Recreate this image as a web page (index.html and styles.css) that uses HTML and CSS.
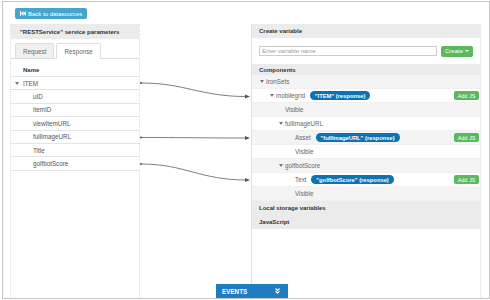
FILE: index.html
```html
<!DOCTYPE html>
<html lang="en">

<head>
    <meta charset="UTF-8">
    <title>REST datasource mapping</title>
    <link rel="stylesheet" href="styles.css">
</head>

<body>
    <div class="frame">
        <div class="topbar">
            <button class="back-btn">
                <svg width="6" height="5" viewBox="0 0 6 5"><rect x="0" y="0" width="1" height="5" fill="#fff"/><polygon points="1,2.5 3.5,0 3.5,5" fill="#fff"/><polygon points="3.5,2.5 6,0 6,5" fill="#fff"/></svg>
                Back to datasources
            </button>
        </div>

        <div class="columns">
            <section class="params">
                <div class="panel-title">"RESTService" service parameters</div>
                <div class="tabs">
                    <span class="tab">Request</span>
                    <span class="tab active">Response</span>
                </div>
                <div class="name-head">Name</div>
                <div class="param-list">
                    <div class="param-row"><span class="caret"></span>ITEM</div>
                    <div class="param-row child">uID</div>
                    <div class="param-row child">itemID</div>
                    <div class="param-row child">viewItemURL</div>
                    <div class="param-row child">fullImageURL</div>
                    <div class="param-row child">Title</div>
                    <div class="param-row child">golfbotScore</div>
                </div>
            </section>

            <div class="links">
                <svg width="111" height="170" viewBox="0 0 111 170">
                    <g fill="none" stroke="#6f6f6f" stroke-width="0.9">
                        <path d="M1,59 C45,59 60,72.5 106,72.5"/>
                        <path d="M1,113.5 C45,113.5 60,114 106,114"/>
                        <path d="M1,140 C45,140 60,156 106,156"/>
                    </g>
                    <g fill="#555">
                        <circle cx="1" cy="59" r="1"/>
                        <circle cx="1" cy="113.5" r="1"/>
                        <circle cx="1" cy="140" r="1"/>
                        <polygon points="105,70.5 110,72.5 105,74.5"/>
                        <polygon points="105,112 110,114 105,116"/>
                        <polygon points="105,154 110,156 105,158"/>
                    </g>
                </svg>
            </div>

            <section class="builder">
                <div class="panel-title">Create variable</div>
                <div class="create-row">
                    <input type="text" placeholder="Enter variable name">
                    <button class="create-btn">Create <span class="down"></span></button>
                </div>
                <div class="panel-title small">Components</div>
                <div class="comp-row alt lvl0"><span class="caret"></span>IronSets</div>
                <div class="comp-row lvl1"><span class="caret"></span>mobilegrid <span class="pill">"ITEM" (response)</span><button class="add-js">Add JS</button></div>
                <div class="comp-row alt lvl2 leaf">Visible</div>
                <div class="comp-row lvl2"><span class="caret"></span>fullImageURL</div>
                <div class="comp-row alt lvl3 leaf">Asset <span class="pill">"fullImageURL" (response)</span><button class="add-js">Add JS</button></div>
                <div class="comp-row lvl3 leaf">Visible</div>
                <div class="comp-row alt lvl2"><span class="caret"></span>golfbotScore</div>
                <div class="comp-row lvl3 leaf">Text <span class="pill">"golfbotScore" (response)</span><button class="add-js">Add JS</button></div>
                <div class="comp-row alt lvl3 leaf">Visible</div>
                <div class="panel-title">Local storage variables</div>
                <div class="panel-title">JavaScript</div>
            </section>
        </div>

        <div class="events-tab">
            <span>EVENTS</span>
            <svg width="5" height="6" viewBox="0 0 5 6"><path d="M0.5,0.5 L2.5,2.5 L4.5,0.5 M0.5,3.2 L2.5,5.2 L4.5,3.2" fill="none" stroke="#fff" stroke-width="1.1"/></svg>
        </div>
    </div>
</body>

</html>
```

FILE: styles.css
```css
* {
    margin: 0;
    padding: 0;
    box-sizing: border-box;
    font-family: "Liberation Sans", Arial, sans-serif;
}

body {
    background-color: #fff;
}

.frame {
    position: relative;
    width: 488px;
    height: 298px;
    margin: 1px 0 0 2px;
    border: 1px solid #c6c6c6;
    padding: 6px 7px 0 7px;
    display: flex;
    flex-direction: column;
}

.topbar {
    height: 11px;
    margin-bottom: 5px;
    padding-left: 5px;
    display: flex;
}

.back-btn {
    width: 72px;
    height: 11px;
    display: flex;
    align-items: center;
    gap: 2px;
    padding: 0 3px 0 5px;
    border: none;
    border-radius: 2px;
    background-color: #45a5cf;
    color: #fff;
    font-size: 6px;
    white-space: nowrap;
}

.columns {
    flex: 1;
    display: flex;
}

.params {
    width: 130px;
    border-left: 1px dotted #dcdcdc;
    border-right: 1px dotted #dcdcdc;
}

.links {
    width: 111px;
}

.links svg {
    display: block;
}

.builder {
    width: 230px;
    border-left: 1px solid #e0e0e0;
    border-right: 1px solid #eee;
}

.panel-title {
    height: 14px;
    display: flex;
    align-items: center;
    padding-left: 7px;
    background-color: #ebebeb;
    color: #333;
    font-size: 6px;
    font-weight: bold;
}

.panel-title.small {
    height: 11px;
}

.params .panel-title {
    height: 15px;
    padding-left: 9px;
}

.tabs {
    display: flex;
    gap: 2px;
    padding: 4px 0 0 4px;
    border-bottom: 1px solid #ddd;
}

.tab {
    height: 15px;
    display: flex;
    align-items: center;
    padding: 0 7px;
    border: 1px solid #ddd;
    border-bottom: none;
    border-radius: 2px 2px 0 0;
    background-color: #f1f1f1;
    color: #666;
    font-size: 6.3px;
}

.tab.active {
    background-color: #fff;
    margin-bottom: -1px;
    height: 16px;
}

.name-head {
    height: 17px;
    display: flex;
    align-items: flex-end;
    padding: 0 0 3px 12px;
    color: #333;
    font-size: 6px;
    font-weight: bold;
}

.param-list {
    border-top: 1px solid #e4e4e4;
}

.param-row {
    height: 13.4px;
    display: flex;
    align-items: center;
    padding-left: 4px;
    border-bottom: 1px solid #e4e4e4;
    color: #555;
    font-size: 6.3px;
}

.param-row.child {
    padding-left: 22px;
}

.caret {
    width: 0;
    height: 0;
    margin-right: 4px;
    border-left: 2px solid transparent;
    border-right: 2px solid transparent;
    border-top: 3px solid #777;
}

.create-row {
    height: 26px;
    display: flex;
    align-items: center;
    gap: 4px;
    padding: 0 7px 0 7px;
}

.create-row input {
    flex: 1;
    height: 10px;
    padding: 0 2px;
    border: 1px solid #ccc;
    font-size: 6px;
    color: #555;
}

.create-row input::placeholder {
    color: #999;
}

.create-btn {
    width: 32px;
    height: 11px;
    display: flex;
    align-items: center;
    justify-content: center;
    gap: 2px;
    border: none;
    border-radius: 2px;
    background-color: #5cb85c;
    color: #fff;
    font-size: 6px;
}

.down {
    width: 0;
    height: 0;
    border-left: 2px solid transparent;
    border-right: 2px solid transparent;
    border-top: 2px solid #fff;
}

.comp-row {
    height: 14px;
    display: flex;
    align-items: center;
    border-bottom: 1px solid #f0f0f0;
    background-color: #fff;
    color: #666;
    font-size: 6.3px;
    white-space: pre;
}

.comp-row.alt {
    background-color: #f4f4f4;
}

.comp-row .caret {
    margin-right: 2px;
}

.lvl0 { padding-left: 8px; }
.lvl1 { padding-left: 18px; }
.lvl2 { padding-left: 27px; }
.lvl3 { padding-left: 37px; }
.leaf.lvl2 { padding-left: 33px; }
.leaf.lvl3 { padding-left: 43px; }

.pill {
    height: 9px;
    display: flex;
    align-items: center;
    margin-left: 3px;
    padding: 0 5px;
    border-radius: 5px;
    background-color: #0d72b4;
    color: #fff;
    font-size: 5.8px;
    font-weight: bold;
}

.add-js {
    width: 25px;
    height: 9px;
    margin-left: auto;
    margin-right: 1px;
    border: none;
    border-radius: 2px;
    background-color: #5cb85c;
    color: #fff;
    font-size: 5.5px;
}

.events-tab {
    position: absolute;
    left: 213px;
    bottom: 0;
    width: 72px;
    height: 14px;
    display: flex;
    align-items: center;
    justify-content: space-between;
    padding: 0 8px 0 6px;
    background-color: #1f7dbf;
    color: #fff;
    font-size: 6.3px;
    font-weight: bold;
}
```
